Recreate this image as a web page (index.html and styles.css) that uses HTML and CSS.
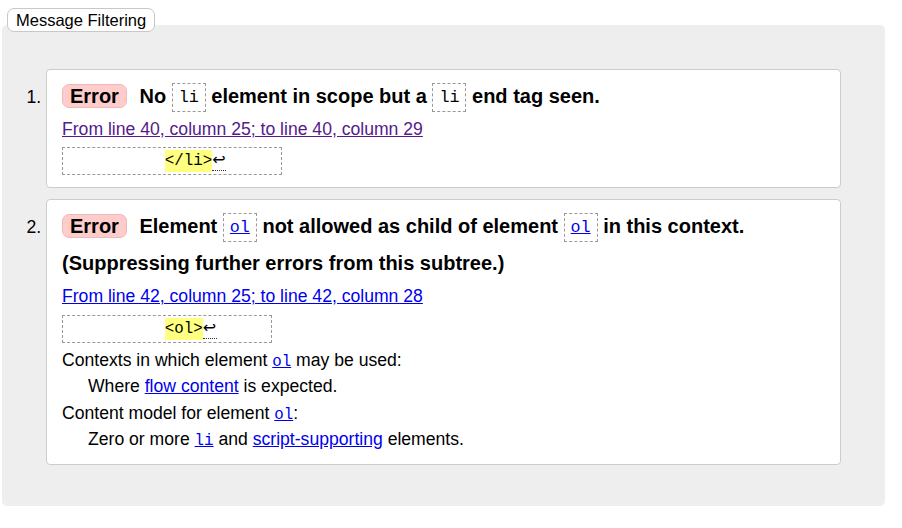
FILE: index.html
```html
<!DOCTYPE html>
<html lang="en">
<head>
<meta charset="utf-8">
<title>Message Filtering</title>
<link rel="stylesheet" href="styles.css">
</head>
<body>
<div class="filter-legend">Message Filtering</div>
<div class="panel">
  <ol class="messages">
    <li class="msg">
      <p class="title"><strong class="badge">Error</strong> No <code class="tag">li</code> element in scope but a <code class="tag">li</code> end tag seen.</p>
      <p class="location"><a class="visited" href="#l40">From line 40, column 25; to line 40, column 29</a></p>
      <code class="extract">          <mark>&lt;/li&gt;</mark><span class="lf" title="Line break">↩</span>     </code>
    </li>
    <li class="msg">
      <p class="title"><strong class="badge">Error</strong> Element <code class="tag"><a href="#ol">ol</a></code> not allowed as child of element <code class="tag"><a href="#ol">ol</a></code> in this context. (Suppressing further errors from this subtree.)</p>
      <p class="location"><a href="#l42">From line 42, column 25; to line 42, column 28</a></p>
      <code class="extract">          <mark>&lt;ol&gt;</mark><span class="lf" title="Line break">↩</span>     </code>
      <dl class="info">
        <dt>Contexts in which element <a href="#ol"><code class="ref">ol</code></a> may be used:</dt>
        <dd>Where <a href="#flow">flow content</a> is expected.</dd>
        <dt>Content model for element <a href="#ol"><code class="ref">ol</code></a>:</dt>
        <dd>Zero or more <a href="#li"><code class="ref">li</code></a> and <a href="#script">script-supporting</a> elements.</dd>
      </dl>
    </li>
  </ol>
</div>
</body>
</html>
```
FILE: styles.css
```css
body {
  margin: 0;
  font-family: "Liberation Sans", Arial, sans-serif;
  font-size: 17.6px;
  color: #000;
  background: #fff;
}

a {
  color: #0000ee;
}

a.visited {
  color: #551a8b;
}

.filter-legend {
  position: relative;
  width: fit-content;
  margin: 8px 0 -7px 7px;
  padding: 0 8px;
  border: 1px solid #c8c8c8;
  border-radius: 7px;
  background: #fff;
  font-size: 16.5px;
  line-height: 22px;
}

.panel {
  margin: 0 17px 0 2px;
  padding: 44px 0 41px;
  background: #eeeeee;
  border-radius: 5px;
}

.messages {
  margin: 0;
  padding: 0 44px;
}

.msg {
  background: #fff;
  border: 1px solid #cccccc;
  border-radius: 4px;
  padding: 8px 15px 12px;
  line-height: 26.4px;
}

.msg + .msg {
  margin-top: 11px;
}

.title {
  margin: 0;
  font-size: 20px;
  font-weight: bold;
  line-height: 37px;
}

.badge {
  display: inline-block;
  margin-right: 7px;
  padding: 0 7px;
  line-height: 22px;
  background: #ffcccc;
  border: 1px solid #efb8b8;
  border-radius: 7px;
}

.tag {
  font-family: "Liberation Mono", "DejaVu Sans Mono", monospace;
  font-size: 16.7px;
  font-weight: normal;
  line-height: 16px;
  padding: 4px 6px;
  border: 1px dashed #999999;
  vertical-align: 1px;
}

.location {
  margin: 1px 0 0;
}

.extract {
  display: block;
  width: fit-content;
  margin-top: 5px;
  padding: 1px 7px;
  border: 1px dashed #999999;
  font-family: "Liberation Mono", "DejaVu Sans Mono", monospace;
  font-size: 15.8px;
  line-height: 23px;
  white-space: pre;
}

.extract mark {
  display: inline-block;
  line-height: 22px;
  background: #ffff80;
  color: #000;
}

.lf {
  display: inline-block;
  width: 14px;
  line-height: 21px;
  font-family: "DejaVu Sans", sans-serif;
  font-size: 16px;
  border-bottom: 1px dotted #333;
}

.ref {
  font-family: "Liberation Mono", "DejaVu Sans Mono", monospace;
  font-size: 15.8px;
  line-height: 14px;
}

.info {
  margin: 4px 0 0;
}

.info dt {
  margin: 0;
}

.info dd {
  margin: 0 0 0 26px;
}
```
